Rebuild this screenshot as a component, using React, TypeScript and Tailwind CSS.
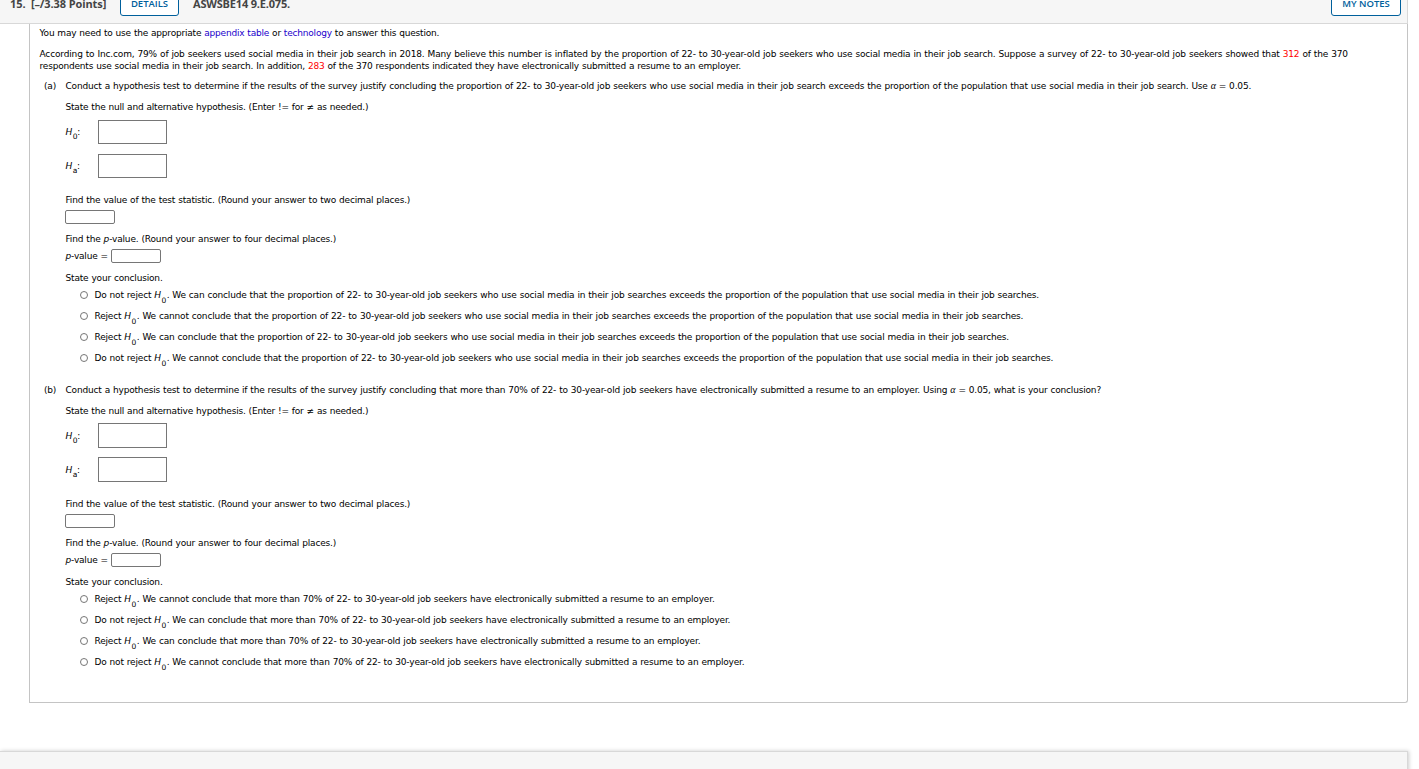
import React from 'react';
import { clsx } from 'clsx';

const H0 = () => (
  <>
    <i>H</i>
    <sub className="relative top-[5px] mx-[0.6px] align-baseline text-[7.5px] leading-none">0</sub>
  </>
);

interface HypothesisRowProps {
  sub: string;
  className?: string;
}

const HypothesisRow: React.FC<HypothesisRowProps> = ({ sub, className }) => (
  <div className={clsx('flex', className)}>
    <span className="w-8 shrink-0 self-end pb-[6px]">
      <i>H</i>
      <sub className="relative top-[4px] ml-[0.6px] align-baseline text-[7.5px] leading-none">{sub}</sub>:
    </span>
    <div className="h-full w-[69px] border border-[#767676] bg-white" />
  </div>
);

const AnswerInput = () => (
  <input className="block h-[14px] w-[50px] rounded-[2px] border border-[#767676] bg-white" />
);

interface Option {
  verdict: string;
  text: string;
}

interface PartProps {
  label: string;
  name: string;
  question: React.ReactNode;
  options: Option[];
  tall?: boolean;
}

const Part: React.FC<PartProps> = ({ label, name, question, options, tall }) => (
  <section className="flex h-[304px]">
    <span className="w-[21.5px] shrink-0">{label}</span>
    <div className="min-w-0 flex-1">
      <p>{question}</p>
      <p className="mt-[9px] tracking-[-0.193px]">
        State the null and alternative hypothesis. (Enter != for ≠ as needed.)
      </p>
      <HypothesisRow sub="0" className={tall ? 'mt-[6px] h-[25px]' : 'mt-[7px] h-6'} />
      <HypothesisRow sub="a" className={tall ? 'mt-[9px] h-[25px]' : 'mt-[10px] h-6'} />
      <p className="mt-4">Find the value of the test statistic. (Round your answer to two decimal places.)</p>
      <div className="mt-1 -ml-[0.5px]">
        <AnswerInput />
      </div>
      <p className="mt-[9px] tracking-[-0.16px]">
        Find the <i>p</i>-value. (Round your answer to four decimal places.)
      </p>
      <div className="mt-1 flex h-[14px] items-center">
        <span className="w-[45.5px]">
          <i>p</i>-value =
        </span>
        <AnswerInput />
      </div>
      <p className="mt-[9px]">State your conclusion.</p>
      <div className="mt-[5px] flex flex-col gap-[9px]">
        {options.map((option) => (
          <label key={option.verdict + option.text} className="flex h-3 items-center pl-[14.5px]">
            <input
              type="radio"
              name={name}
              className="mr-[6.5px] size-2 shrink-0 appearance-none rounded-full border border-[#767676] bg-white"
            />
            <span>
              {option.verdict} <H0 />. {option.text}
            </span>
          </label>
        ))}
      </div>
    </div>
  </section>
);

const SEARCHES =
  'conclude that the proportion of 22- to 30-year-old job seekers who use social media in their job searches exceeds the proportion of the population that use social media in their job searches.';
const RESUME =
  'conclude that more than 70% of 22- to 30-year-old job seekers have electronically submitted a resume to an employer.';

const optionsA: Option[] = [
  { verdict: 'Do not reject', text: `We can ${SEARCHES}` },
  { verdict: 'Reject', text: `We cannot ${SEARCHES}` },
  { verdict: 'Reject', text: `We can ${SEARCHES}` },
  { verdict: 'Do not reject', text: `We cannot ${SEARCHES}` },
];

const optionsB: Option[] = [
  { verdict: 'Reject', text: `We cannot ${RESUME}` },
  { verdict: 'Do not reject', text: `We can ${RESUME}` },
  { verdict: 'Reject', text: `We can ${RESUME}` },
  { verdict: 'Do not reject', text: `We cannot ${RESUME}` },
];

const Alpha = () => <i className="font-['Liberation_Serif',serif] text-[10px] leading-none">α</i>;

const QuestionHeader = () => (
  <header className="flex h-6 w-[1408px] shrink-0 items-start border-r border-b border-[#d8d8d8] bg-[#f6f6f6] pr-[6px] pl-[10px] font-['Open_Sans',sans-serif] text-[11px] font-bold tracking-[-0.1px] text-[#444]">
    <span className="mt-[-4px] w-[110px] leading-[15px] whitespace-nowrap">15.&nbsp; [–/3.38 Points]</span>
    <button className="-mt-2 h-6 w-[59px] rounded-[3px] border border-[#00609c] bg-white text-[9.5px] font-semibold tracking-normal text-[#00609c]">
      DETAILS
    </button>
    <span className="mt-[-4px] ml-[14px] leading-[15px] tracking-[-0.18px]">ASWSBE14 9.E.075.</span>
    <button className="-mt-2 ml-auto h-6 w-[70px] rounded-[3px] border border-[#00609c] bg-white text-[9.5px] font-semibold tracking-normal whitespace-nowrap text-[#00609c]">
      MY NOTES
    </button>
  </header>
);

export default function App() {
  return (
    <div className="flex h-[769px] w-[1419px] flex-col overflow-hidden bg-white">
      <QuestionHeader />
      <main className="ml-[29px] h-[679px] w-[1379px] shrink-0 rounded-br-[3px] border border-t-0 border-[#c4c4c4] pt-[3px] pl-[9.5px] font-['DejaVu_Sans',Verdana,sans-serif] text-[9px] leading-3 tracking-[-0.177px] [word-spacing:0.3px] whitespace-nowrap text-black">
        <p className="tracking-[-0.2px]">
          You may need to use the appropriate <a className="text-[#2200cc]">appendix table</a> or{' '}
          <a className="text-[#2200cc]">technology</a> to answer this question.
        </p>
        <p className="mt-[9px] tracking-[-0.193px]">
          <span className="tracking-[-0.153px]">
            According to Inc.com, 79% of job seekers used social media in their job search in 2018. Many believe this
            number is inflated by the proportion of 22- to 30-year-old job seekers who use social media in their job
            search. Suppose a survey of 22- to 30-year-old job seekers showed that{' '}
            <span className="text-[#ff0000]">312</span> of the 370
          </span>
          <br />
          respondents use social media in their job search. In addition, <span className="text-[#ff0000]">283</span> of
          the 370 respondents indicated they have electronically submitted a resume to an employer.
        </p>
        <div className="mt-2 pl-[4.5px]">
          <Part
            label="(a)"
            name="part-a"
            question={
              <>
                Conduct a hypothesis test to determine if the results of the survey justify concluding the proportion of
                22- to 30-year-old job seekers who use social media in their job search exceeds the proportion of the
                population that use social media in their job search. Use <Alpha /> = 0.05.
              </>
            }
            options={optionsA}
          />
          <Part
            label="(b)"
            name="part-b"
            question={
              <>
                Conduct a hypothesis test to determine if the results of the survey justify concluding that more than
                70% of 22- to 30-year-old job seekers have electronically submitted a resume to an employer. Using{' '}
                <Alpha /> = 0.05, what is your conclusion?
              </>
            }
            options={optionsB}
            tall
          />
        </div>
      </main>
      <footer className="mt-12 h-10 w-[1408px] shrink-0 border-t border-r border-[#d8d8d8] bg-[#f6f6f6] shadow-[1px_0_4px_rgba(0,0,0,0.2)]" />
    </div>
  );
}
